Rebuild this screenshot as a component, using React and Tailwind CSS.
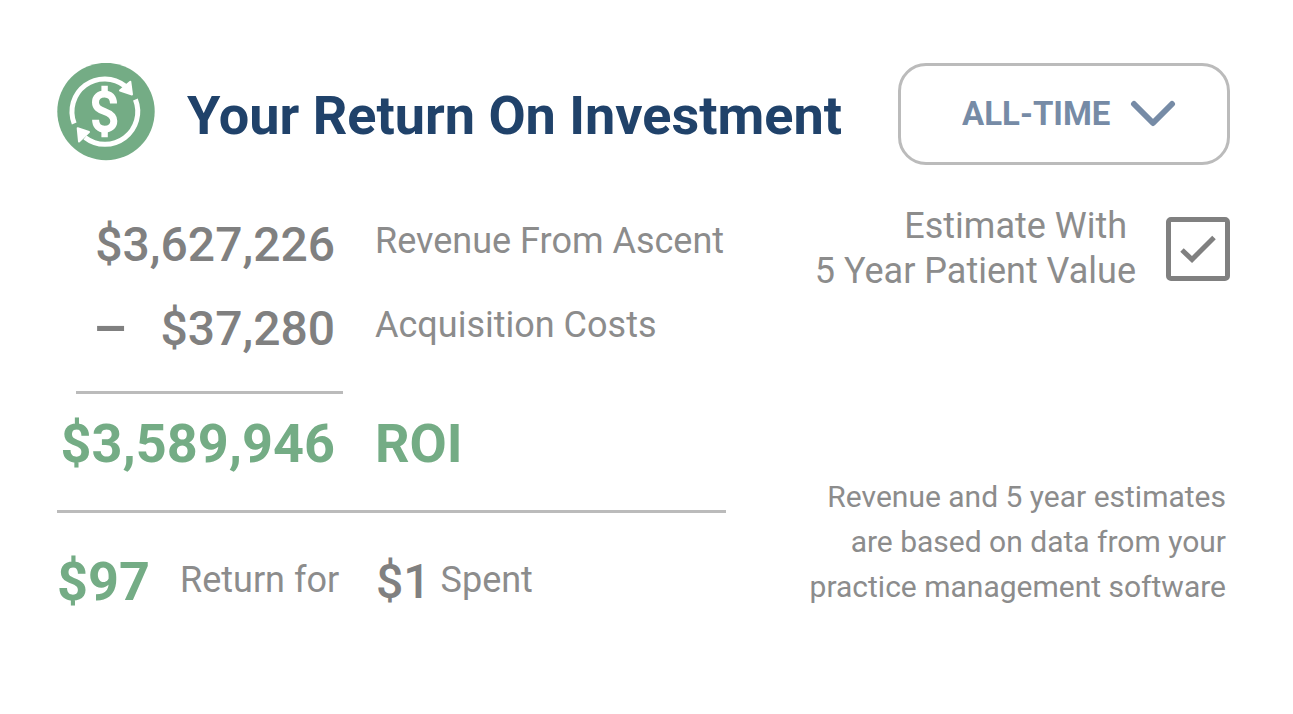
import { useState } from "react";

function RoiIcon() {
  return (
    <svg viewBox="0 0 98 98" className="size-[98px] shrink-0" aria-hidden="true">
      <circle cx="49" cy="48.5" r="48.7" fill="#74ac85" />
      <g fill="none" stroke="#fff" strokeWidth="5">
        <path d="M17.2 60.5A32.7 32.7 0 0 1 68 23" />
        <path d="M78.4 36.500A32.700 32.700 0 0 1 28 74.500" />
        <path
          strokeWidth="7"
          d="M56.500 40.500C56.500 34.500 53 31 47.600 31C42 31 38.500 34.500 38.500 39.300C38.500 44.500 42 46.500 47.500 48.500C53.500 50.700 56.800 53 56.800 58C56.800 63 53 66.200 47.600 66.200C42 66.200 38.600 62.500 38.600 56.800"
        />
        <path strokeWidth="6.400" d="M47.600 22.800V31M47.600 66V74.300" />
      </g>
      <g fill="#fff" stroke="#fff" strokeWidth="2" strokeLinejoin="round">
        <path d="M73.300 18.700L75 31.500L63 27.500Z" />
        <path d="M20.700 65.300L32 69L22 78.500Z" />
      </g>
    </svg>
  );
}

function PeriodSelect({ value, onChange }) {
  return (
    <div className="relative w-[332px] shrink-0">
      <select
        aria-label="Period"
        value={value}
        onChange={(e) => onChange(e.target.value)}
        className="h-[102px] w-full appearance-none rounded-[28px] border-3 border-[#bbbbbb] bg-white pl-[61px] text-[33px] font-bold text-[#768ba6] outline-none"
      >
        <option value="all">ALL-TIME</option>
        <option value="year">THIS YEAR</option>
        <option value="month">THIS MONTH</option>
      </select>
      <svg
        viewBox="0 0 46 28"
        className="pointer-events-none absolute right-[54px] top-[37px] h-7 w-[46px]"
        fill="none"
        stroke="#768ba6"
        strokeWidth="6"
        strokeLinecap="round"
        strokeLinejoin="round"
        aria-hidden="true"
      >
        <path d="M4 4L23 23L42 4" />
      </svg>
    </div>
  );
}

function EstimateToggle({ checked, onChange }) {
  return (
    <label className="flex items-center justify-end gap-[30px]">
      <span className="text-right text-[36px] leading-[45px]">
        Estimate With&nbsp;
        <br />5 Year Patient Value
      </span>
      <span className="relative size-16 shrink-0">
        <input
          type="checkbox"
          checked={checked}
          onChange={(e) => onChange(e.target.checked)}
          className="block size-16 appearance-none rounded-[5px] border-[5px] border-[#808080]"
        />
        {checked && (
          <svg
            viewBox="0 0 64 64"
            className="pointer-events-none absolute inset-0 size-16"
            fill="none"
            stroke="#808080"
            strokeWidth="5"
            aria-hidden="true"
          >
            <path d="M16 33L26 42.500L48 20.500" />
          </svg>
        )}
      </span>
    </label>
  );
}

export default function App() {
  const [period, setPeriod] = useState("all");
  const [estimate, setEstimate] = useState(true);

  return (
    <main className="min-h-screen bg-white py-[63px] pl-[57px] pr-[63px] font-['Roboto',sans-serif] text-[#8c8c8c]">
      <header className="flex items-start">
        <RoiIcon />
        <h1 className="ml-8 flex-1 whitespace-nowrap text-[54px] font-bold leading-[106px] text-[#20426a]">
          Your Return On Investment
        </h1>
        <PeriodSelect value={period} onChange={setPeriod} />
      </header>

      <div className="mt-[34px] grid grid-cols-[57%_1fr]">
        <section>
          <table className="w-full table-fixed whitespace-nowrap text-left">
            <colgroup>
              <col className="w-[278px]" />
              <col />
            </colgroup>
            <tbody>
              <tr className="h-[84px]">
                <td className="text-right text-[48px] font-medium leading-[56px] text-[#808080]">
                  $3,627,226
                </td>
                <th scope="row" className="pb-2 pl-10 text-[36px] font-normal leading-[44px]">
                  Revenue From Ascent
                </th>
              </tr>
              <tr className="h-[84px]">
                <td className="text-[48px] font-medium leading-[56px] text-[#808080]">
                  <div className="flex justify-between pl-9">
                    <span className="text-[54px]">–</span>
                    <span>$37,280</span>
                  </div>
                </td>
                <th scope="row" className="pb-2 pl-10 text-[36px] font-normal leading-[44px]">
                  Acquisition Costs
                </th>
              </tr>
            </tbody>
          </table>

          <hr className="ml-[19px] mt-5 w-[267px] border-t-3 border-[#bbbbbb]" />

          <div className="mt-2 flex h-[84px] items-center text-[54px] font-bold leading-[60px] text-[#74ac85]">
            <span className="w-[278px] text-right">$3,589,946</span>
            <span className="pl-10">ROI</span>
          </div>

          <hr className="mt-6 border-t-3 border-[#bbbbbb]" />

          <p className="mt-[27px] flex h-[84px] items-center whitespace-nowrap">
            <strong className="w-[123px] text-[54px] font-bold leading-[60px] text-[#74ac85]">$97</strong>
            <span className="w-[196px] pb-1 text-[36px] leading-[44px]">Return for</span>
            <strong className="text-[48px] font-medium leading-[56px] text-[#808080]">$1</strong>
            <span className="pb-1 pl-2.5 text-[36px] leading-[44px]">Spent</span>
          </p>
        </section>

        <aside className="flex flex-col justify-between pb-[15px] pt-px">
          <EstimateToggle checked={estimate} onChange={setEstimate} />
          <p className="pr-1 text-right text-[30px] leading-[45px]">
            Revenue and 5 year estimates
            <br />
            are based on data from your
            <br />
            practice management software
          </p>
        </aside>
      </div>
    </main>
  );
}
